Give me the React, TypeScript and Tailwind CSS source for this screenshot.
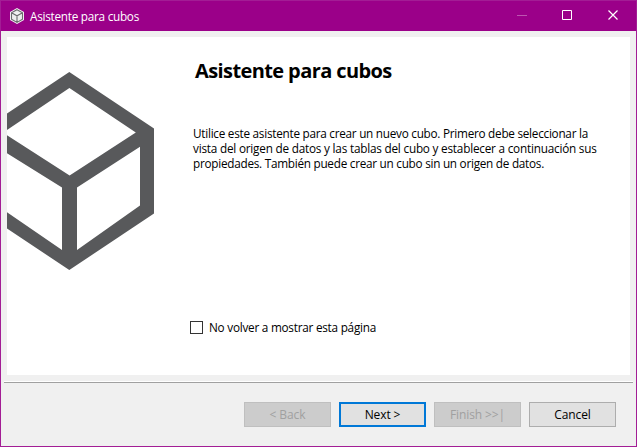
import React from 'react';

function CubeMark() {
  return (
    <svg className="h-[338px] w-[149px] shrink-0" viewBox="7 37 149 338" aria-hidden="true">
      <path
        fill="#58595b"
        fillRule="evenodd"
        d="M69.3 72L154 128.5V213.6L69.3 270L-15.4 213.6V128.5ZM69.4 88L3 132.6L69.6 175.4L135.8 132.6ZM77 187.5V250L140 205.6V146.8ZM62 187.5V250L-1.4 206.6V148Z"
      />
    </svg>
  );
}

function TitleBar() {
  return (
    <header className="flex h-[31px] shrink-0 items-center border-t border-[#a31d95] bg-[#9b0089] pl-[8px] text-white">
      <svg className="h-4 w-4" viewBox="0 0 16 16" aria-hidden="true">
        <path d="M8 0L15 4V12L8 16L1 12V4Z" fill="#f4f4f4" />
        <path d="M8 1.7L13.5 4.8V11.2L8 14.4L2.5 11.2V4.8ZM2.5 4.8L8 7.8L13.5 4.8M8 7.8V14.4" fill="#eee" stroke="#6a6b6d" strokeWidth="1.1" />
      </svg>
      <span className="ml-[5px] text-[11.75px] leading-4 tracking-[-0.26px] whitespace-nowrap">Asistente para cubos</span>
      <svg className="ml-auto h-[30px] w-[138px] shrink-0" viewBox="498 1 138 30" fill="none" aria-hidden="true">
        <path d="M517 15.5H527" stroke="#bd55b1" />
        <path d="M562.5 10.5H571.5V19.5H562.5Z" stroke="#fff" />
        <path d="M608.5 10.5L617.5 19.5M617.5 10.5L608.5 19.5" stroke="#fff" strokeWidth="1.2" />
      </svg>
    </header>
  );
}

type ButtonKind = 'normal' | 'primary' | 'disabled';

const buttonStyles: Record<ButtonKind, string> = {
  normal: 'border border-[#adadad] bg-[#e1e1e1] text-black',
  primary: 'border-2 border-[#0078d7] bg-[#e1e1e1] text-black',
  disabled: 'border border-[#bfbfbf] bg-[#cccccc] text-[#a0a0a0]',
};

function WizardButton({ kind, children }: { kind: ButtonKind; children: React.ReactNode }) {
  return (
    <button disabled={kind === 'disabled'} className={`flex h-[25px] w-[87px] items-center justify-center text-[12px] leading-4 tracking-[-0.1px] whitespace-nowrap ${buttonStyles[kind]}`}>
      {children}
    </button>
  );
}

export default function App() {
  return (
    <div className="flex h-[447px] w-[637px] flex-col overflow-hidden border-x border-b border-[#a31d95] bg-[#f0f0f0] font-['Open_Sans','Noto_Sans',sans-serif] text-black">
      <TitleBar />
      <main className="mx-[6px] mt-[6px] flex h-[338px] shrink-0 bg-white">
        <CubeMark />
        <div className="flex flex-col pt-[20px] pl-[37px] whitespace-nowrap">
          <h1 className="ml-[2px] text-[20px] leading-7 font-bold tracking-[-0.6px]">Asistente para cubos</h1>
          <div className="mt-[41px] text-[11.75px] leading-[15px]">
            <p className="tracking-[-0.26px]">Utilice este asistente para crear un nuevo cubo. Primero debe seleccionar la</p>
            <p className="tracking-[-0.21px]">vista del origen de datos y las tablas del cubo y establecer a continuación sus</p>
            <p className="tracking-[-0.26px]">propiedades. También puede crear un cubo sin un origen de datos.</p>
          </div>
          <label className="mt-[148px] -ml-[3px] flex items-center">
            <input type="checkbox" className="h-[13px] w-[13px] appearance-none border border-[#333] bg-white" />
            <span className="ml-[6px] text-[11.75px] leading-4 tracking-[-0.24px]">No volver a mostrar esta página</span>
          </label>
        </div>
      </main>
      <div className="mx-[3px] mt-[6px] h-[2px] shrink-0 border-t border-white bg-[#a0a0a0]" />
      <footer className="mt-[19px] flex justify-end gap-2 pr-[20px]">
        <WizardButton kind="disabled">&lt; Back</WizardButton>
        <WizardButton kind="primary">Next &gt;</WizardButton>
        <WizardButton kind="disabled">Finish &gt;&gt;|</WizardButton>
        <WizardButton kind="normal">Cancel</WizardButton>
      </footer>
    </div>
  );
}
